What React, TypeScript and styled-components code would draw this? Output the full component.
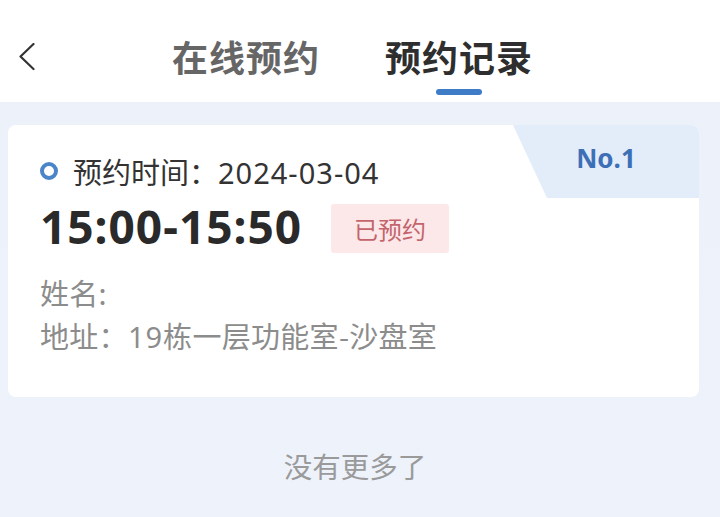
import styled, { createGlobalStyle } from "styled-components"

// Global //

const GlobalStyle = createGlobalStyle`
	html, body {
		margin: 0;
		padding: 0;
		background: #edf2fa;
		font-family: "Noto Sans", "Noto Sans CJK SC", sans-serif;
	}
	* {
		box-sizing: border-box;
	}
`

// Components //

const tabs = [
	{ label: "在线预约", active: false },
	{ label: "预约记录", active: true }
]

export default function App() {
	return (
		<>
			<GlobalStyle />
			<Page>
				<Header>
					<BackButton aria-label="返回">
						<svg width="16" height="28" viewBox="0 0 16 28" fill="none">
							<polyline
								points="14.5,1 1.5,13.5 14.5,26"
								stroke="#333"
								strokeWidth="2.2"
								strokeLinecap="round"
								strokeLinejoin="round"
							/>
						</svg>
					</BackButton>
					<TabGroup>
						{tabs.map((tab) => (
							<Tab key={tab.label}>
								<TabLabel $active={tab.active}>{tab.label}</TabLabel>
								<TabIndicator $active={tab.active} />
							</Tab>
						))}
					</TabGroup>
				</Header>

				<List>
					<Card>
						<NumberTag>No.1</NumberTag>
						<DateRow>
							<Dot />
							<span>
								预约时间：<Digits>2024-03-04</Digits>
							</span>
						</DateRow>
						<TimeRow>
							<TimeText>15:00-15:50</TimeText>
							<StatusBadge>已预约</StatusBadge>
						</TimeRow>
						<InfoRow $first>姓名:</InfoRow>
						<InfoRow>
							地址：<Digits>19</Digits>栋一层功能室-沙盘室
						</InfoRow>
					</Card>
				</List>

				<EndNote>没有更多了</EndNote>
			</Page>
		</>
	)
}

// Styled Components //

const Page = styled.div`
	min-height: 517px;
	display: flex;
	flex-direction: column;
	background: linear-gradient(180deg, #e9eff8 0%, #edf2fa 30%, #edf2fb 100%);
`

const Header = styled.header`
	height: 102px;
	background: #ffffff;
	display: flex;
	align-items: flex-start;
	padding: 34px 0 0 19px;
`

const BackButton = styled.button`
	border: 0;
	background: none;
	padding: 0;
	margin-top: 9px;
	width: 16px;
	height: 28px;
	display: flex;
`

const TabGroup = styled.nav`
	display: flex;
	gap: 65px;
	margin-left: 137px;
`

const Tab = styled.div`
	display: flex;
	flex-direction: column;
	align-items: center;
`

const TabLabel = styled.div<{ $active: boolean }>`
	font-family: "Noto Sans CJK SC", sans-serif;
	font-size: 36px;
	line-height: 44px;
	font-weight: 700;
	letter-spacing: 1px;
	color: ${({ $active }) => ($active ? "#2e2e2e" : "#666666")};
`

const TabIndicator = styled.div<{ $active: boolean }>`
	width: 46px;
	height: 6px;
	margin-top: 11px;
	border-radius: 3px;
	background: ${({ $active }) => ($active ? "#3f7cc8" : "transparent")};
`

const List = styled.main`
	padding: 23px 21px 0 8px;
`

const Card = styled.section`
	position: relative;
	background: #ffffff;
	border-radius: 8px;
	padding: 28px 0 44px 32px;
	overflow: hidden;
`

const NumberTag = styled.div`
	position: absolute;
	top: 0;
	right: 0;
	width: 186px;
	height: 73px;
	padding-top: 16px;
	text-align: center;
	font-family: "Noto Sans", sans-serif;
	font-size: 26px;
	line-height: 34px;
	font-weight: 700;
	color: #3d6fb6;
	background: #e3ecf9;
	clip-path: polygon(0 0, 100% 0, 100% 100%, 34px 100%);
`

const Digits = styled.span`
	font-family: "Noto Sans", sans-serif;
	letter-spacing: 1px;
`

const DateRow = styled.div`
	display: flex;
	align-items: center;
	gap: 15px;
	height: 36px;
	font-family: "Noto Sans CJK SC", sans-serif;
	font-size: 29px;
	color: #333333;
`

const Dot = styled.span`
	width: 18px;
	height: 18px;
	border-radius: 50%;
	border: 4px solid #4a85c8;
	flex-shrink: 0;
`

const TimeRow = styled.div`
	display: flex;
	align-items: center;
	gap: 29px;
	margin-top: 15px;
`

const TimeText = styled.div`
	font-family: "Noto Sans", sans-serif;
	font-size: 46px;
	font-weight: 700;
	line-height: 49px;
	letter-spacing: 1px;
	color: #2a2a2a;
	margin-top: -4px;
`

const StatusBadge = styled.span`
	width: 118px;
	height: 49px;
	display: flex;
	align-items: center;
	justify-content: center;
	border-radius: 3px;
	background: #fde8e9;
	color: #c4646c;
	font-family: "Noto Sans CJK SC", sans-serif;
	font-size: 24px;
`

const InfoRow = styled.div<{ $first?: boolean }>`
	margin-top: ${({ $first }) => ($first ? "21px" : "7px")};
	height: 36px;
	line-height: 36px;
	font-family: "Noto Sans CJK SC", sans-serif;
	font-size: 29px;
	letter-spacing: 0.3px;
	color: #8c8c8c;
`

const EndNote = styled.div`
	margin-top: 51px;
	text-align: center;
	font-family: "Noto Sans CJK SC", sans-serif;
	font-size: 28.5px;
	line-height: 36px;
	color: #9a9a9a;
	padding-right: 10px;
`
